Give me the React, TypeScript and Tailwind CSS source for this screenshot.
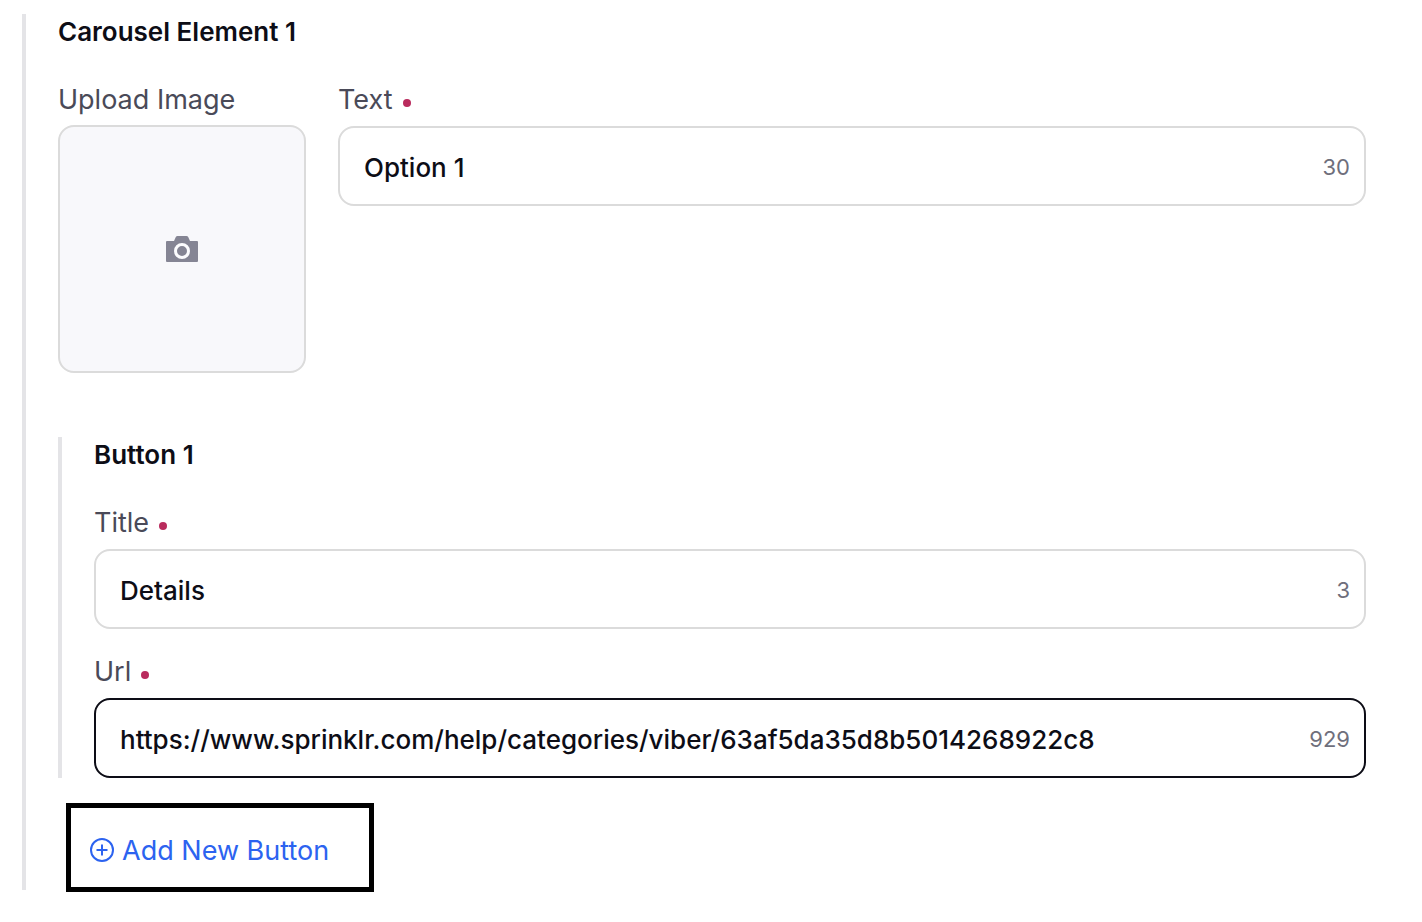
import { useState } from 'react';

const inputBase =
  'h-20 w-full rounded-2xl border-2 bg-white pt-0.5 pl-6 pr-24 text-[26px] font-medium text-[#0d0d16] outline-none';

function RequiredDot() {
  return <span aria-hidden="true" className="mt-1.5 size-2 rounded-full bg-[#b92b5d]" />;
}

type FieldProps = {
  id: string;
  label: string;
  initial: string;
  limit: number;
  active?: boolean;
};

function Field({ id, label, initial, limit, active = false }: FieldProps) {
  const [value, setValue] = useState(initial);
  return (
    <div className="flex min-w-0 flex-1 flex-col">
      <label htmlFor={id} className="flex h-[42px] items-start gap-[10px] text-[27px] leading-8 text-[#4a4a58]">
        <span>{label}</span>
        <span className="flex h-8 items-center">
          <RequiredDot />
        </span>
      </label>
      <div className="relative">
        <input
          id={id}
          value={value}
          required
          onChange={(e) => setValue(e.target.value)}
          className={`${inputBase} ${active ? 'border-[#0d0d16]' : 'border-[#dbdbdb]'}`}
        />
        <span className="pointer-events-none absolute inset-y-0 right-4 flex items-center pt-0.5 text-[22px] text-[#6f6f7c]">
          {limit - value.length}
        </span>
      </div>
    </div>
  );
}

export default function App() {
  return (
    <main className="bg-white pt-[14px] pr-14 pb-8 pl-[22px] font-['Inter',sans-serif]">
      <section className="border-l-4 border-[#e4e4e7] pl-8">
        <h2 className="text-[26px] leading-9 font-semibold text-[#0d0d16]">Carousel Element 1</h2>

        <div className="mt-[34px] flex gap-8">
          <div className="flex w-62 shrink-0 flex-col">
            <label htmlFor="image" className="h-[41px] text-[27px] leading-8 text-[#4a4a58]">
              Upload Image
            </label>
            <button
              id="image"
              type="button"
              className="flex size-62 items-center justify-center rounded-2xl border-2 border-[#dbdbdb] bg-[#f8f8fb]"
            >
              <svg width="32" height="28" viewBox="0 0 32 28" fill="none" aria-hidden="true">
                <path
                  fill="#858594"
                  d="M11.500 1h9a2 2 0 0 1 1.700 1L24 6h7a1 1 0 0 1 1 1v19a1 1 0 0 1-1 1H1a1 1 0 0 1-1-1V7a1 1 0 0 1 1-1h7l1.800-4a2 2 0 0 1 1.700-1z"
                />
                <circle cx="16" cy="16" r="6.500" stroke="#fcfcfe" strokeWidth="3" />
              </svg>
            </button>
          </div>
          <Field id="text" label="Text" initial="Option 1" limit={38} />
        </div>

        <section className="mt-16 border-l-4 border-[#e4e4e7] pl-8">
          <h3 className="text-[26px] leading-9 font-semibold text-[#0d0d16]">Button 1</h3>
          <div className="mt-[34px] flex flex-col gap-[27px]">
            <Field id="title" label="Title" initial="Details" limit={10} />
            <Field
              id="url"
              label="Url"
              initial="https://www.sprinklr.com/help/categories/viber/63af5da35d8b5014268922c8"
              limit={1000}
              active
            />
          </div>
        </section>

        <div className="relative flex h-28 items-end pb-5 pl-8">
          <button type="button" className="flex h-10 items-center gap-2 text-[27px] leading-8 text-[#2c63f0]">
            <svg width="24" height="24" viewBox="0 0 24 24" fill="none" stroke="currentColor" strokeWidth="2" aria-hidden="true">
              <circle cx="12" cy="12" r="11" />
              <path d="M12 6.500v11M6.500 12h11" />
            </svg>
            <span className="pt-0.5">Add New Button</span>
          </button>
          <div
            aria-hidden="true"
            className="pointer-events-none absolute -bottom-0.5 left-2 h-[89px] w-[308px] border-5 border-black"
          />
        </div>
      </section>
    </main>
  );
}
